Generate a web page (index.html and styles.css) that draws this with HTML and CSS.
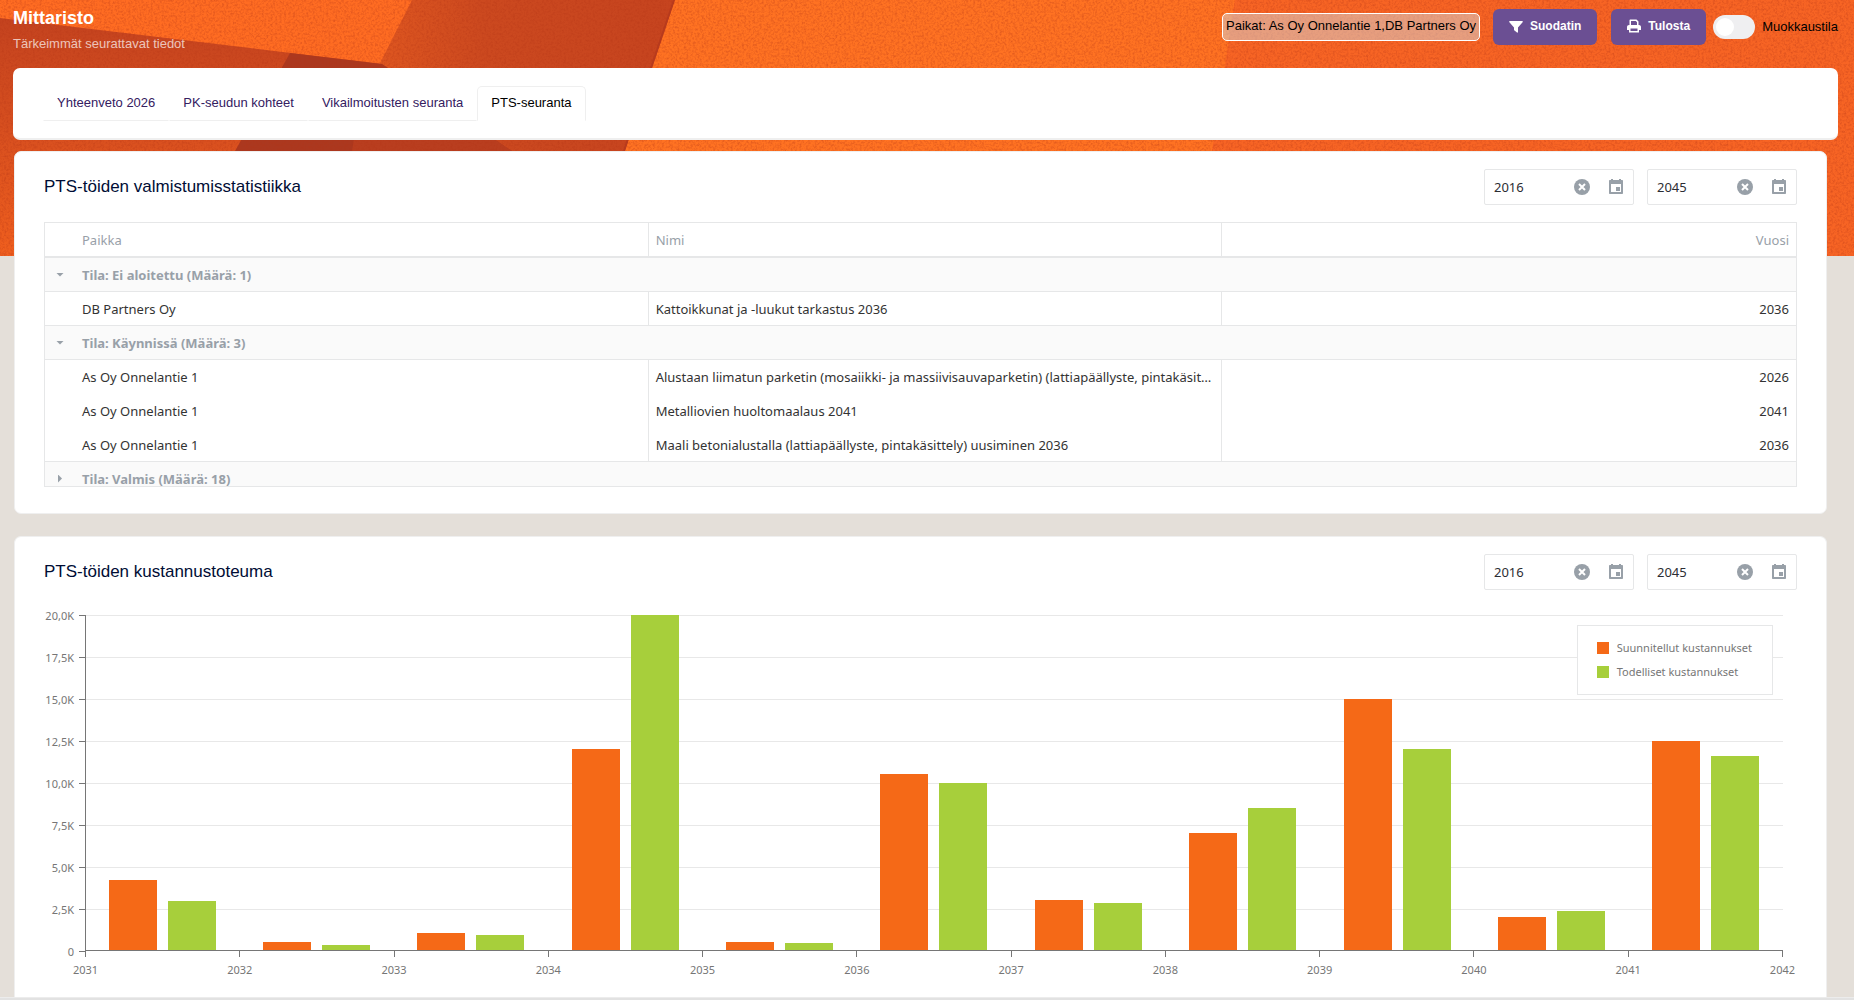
FILE: index.html
```html
<!DOCTYPE html>
<html lang="fi">
<head>
    <meta charset="UTF-8">
    <meta name="viewport" content="width=device-width, initial-scale=1.0">
    <title>Mittaristo</title>
    <link rel="stylesheet" href="styles.css">
</head>
<body>

    <!-- taustakuvio -->
    <svg class="backdrop" viewBox="0 0 1854 256" preserveAspectRatio="none" aria-hidden="true">
        <defs>
            <linearGradient id="leftShade" x1="0" y1="0" x2="0" y2="1">
                <stop offset="0" stop-color="#c4431f"/>
                <stop offset="0.5" stop-color="#d9501f"/>
                <stop offset="1" stop-color="#f05f1e"/>
            </linearGradient>
            <linearGradient id="midShade" x1="0" y1="0" x2="1" y2="0">
                <stop offset="0" stop-color="#de5620"/>
                <stop offset="0.35" stop-color="#cc491f"/>
                <stop offset="1" stop-color="#c6441f"/>
            </linearGradient>
            <filter id="grain" x="0" y="0" width="100%" height="100%" color-interpolation-filters="sRGB">
                <feTurbulence type="fractalNoise" baseFrequency="0.45" numOctaves="3" seed="4"/>
                <feColorMatrix values="0 0 0 0 0.7  0 0 0 0 0.2  0 0 0 0 0.08  0.8 0 0 0 -0.32"/>
            </filter>
        </defs>
        <rect width="1854" height="256" fill="#ff6c22"/>
        <path d="M412 0H675L625 151L590 256H380V63Z" fill="url(#midShade)"/>
        <path d="M0 18L382 64L512 151L600 256H0Z" fill="url(#leftShade)"/>
        <path d="M290 53L382 64L512 151H235Z" fill="#ab381f"/>
        <path d="M360 100L436 100L512 151H352Z" fill="#b93e1f"/>
        <path d="M675 0L652 68L625 151L590 256H1190L1212 151L1235 0Z" fill="#ff7222"/>
        <path d="M674 0L651 68L624 151" fill="none" stroke="#b83b1e" stroke-width="2"/>
        <path d="M1235 0H1854V256H1190L1212 151Z" fill="#f76424"/>
        <rect width="1854" height="256" filter="url(#grain)"/>
    </svg>

    <header class="page-header">
        <div>
            <h1>Mittaristo</h1>
            <p>Tärkeimmät seurattavat tiedot</p>
        </div>
        <div class="toolbar">
            <span class="filter-info">Paikat: As Oy Onnelantie 1,DB Partners Oy</span>
            <button type="button" class="btn">
                <svg viewBox="0 0 14 14" width="14" height="14" aria-hidden="true"><path d="M1 2h12c.8 0 1 .7.6 1.200L9 8.500V13c0 .6-.5.8-1 .5L5.500 11.500C5.200 11.300 5 11 5 10.700V8.500L.4 3.200C0 2.700.2 2 1 2z"/></svg>
                Suodatin
            </button>
            <button type="button" class="btn">
                <svg viewBox="0 0 14 14" width="14" height="14" aria-hidden="true"><path fill-rule="evenodd" d="M3.500 0.500h6L11.500 2.500V6H12c1.100 0 2 .9 2 2v3h-2v2.500H2V11H0V8c0-1.100.9-2 2-2h.5V1.500c0-.6.4-1 1-1zM4 2v4h6V3.200L8.800 2zM3.500 9.500V12h7V9.500z"/></svg>
                Tulosta
            </button>
            <label class="switch">
                <input type="checkbox">
                Muokkaustila
            </label>
        </div>
    </header>

    <nav class="tabs-card">
        <ul class="tabs">
            <li><a href="#">Yhteenveto 2026</a></li>
            <li><a href="#">PK-seudun kohteet</a></li>
            <li><a href="#">Vikailmoitusten seuranta</a></li>
            <li><a href="#" class="active">PTS-seuranta</a></li>
        </ul>
    </nav>

    <main>
        <section class="widget">
            <div class="widget-head">
                <h2>PTS-töiden valmistumisstatistiikka</h2>
                <div class="dates">
                    <div class="date-box">
                        <input type="text" value="2016" aria-label="Alkuvuosi">
                        <button type="button" aria-label="Tyhjennä"><svg viewBox="0 0 16 16"><circle cx="8" cy="8" r="8"/><path d="M5 5l6 6M11 5l-6 6" class="cross"/></svg></button>
                        <button type="button" aria-label="Valitse"><svg viewBox="0 0 16 16"><path fill-rule="evenodd" d="M3 0h2v1h6V0h2v1h1c.6 0 1 .4 1 1v12c0 .6-.4 1-1 1H2c-.6 0-1-.4-1-1V2c0-.6.4-1 1-1h1zM3 5v8h10V5zM8 8h4v4H8z"/></svg></button>
                    </div>
                    <div class="date-box">
                        <input type="text" value="2045" aria-label="Loppuvuosi">
                        <button type="button" aria-label="Tyhjennä"><svg viewBox="0 0 16 16"><circle cx="8" cy="8" r="8"/><path d="M5 5l6 6M11 5l-6 6" class="cross"/></svg></button>
                        <button type="button" aria-label="Valitse"><svg viewBox="0 0 16 16"><path fill-rule="evenodd" d="M3 0h2v1h6V0h2v1h1c.6 0 1 .4 1 1v12c0 .6-.4 1-1 1H2c-.6 0-1-.4-1-1V2c0-.6.4-1 1-1h1zM3 5v8h10V5zM8 8h4v4H8z"/></svg></button>
                    </div>
                </div>
            </div>

            <div class="grid-box">
                <table>
                    <colgroup>
                        <col class="col-toggle">
                        <col>
                        <col>
                        <col>
                    </colgroup>
                    <thead>
                        <tr>
                            <th></th>
                            <th>Paikka</th>
                            <th>Nimi</th>
                            <th class="num">Vuosi</th>
                        </tr>
                    </thead>
                    <tbody>
                        <tr class="group">
                            <td><span class="arrow open"></span></td>
                            <td colspan="3">Tila: Ei aloitettu (Määrä: 1)</td>
                        </tr>
                        <tr class="last">
                            <td></td>
                            <td>DB Partners Oy</td>
                            <td>Kattoikkunat ja -luukut tarkastus 2036</td>
                            <td class="num">2036</td>
                        </tr>
                        <tr class="group">
                            <td><span class="arrow open"></span></td>
                            <td colspan="3">Tila: Käynnissä (Määrä: 3)</td>
                        </tr>
                        <tr>
                            <td></td>
                            <td>As Oy Onnelantie 1</td>
                            <td>Alustaan liimatun parketin (mosaiikki- ja massiivisauvaparketin) (lattiapäällyste, pintakäsittely) uusiminen 2026</td>
                            <td class="num">2026</td>
                        </tr>
                        <tr>
                            <td></td>
                            <td>As Oy Onnelantie 1</td>
                            <td>Metalliovien huoltomaalaus 2041</td>
                            <td class="num">2041</td>
                        </tr>
                        <tr class="last">
                            <td></td>
                            <td>As Oy Onnelantie 1</td>
                            <td>Maali betonialustalla (lattiapäällyste, pintakäsittely) uusiminen 2036</td>
                            <td class="num">2036</td>
                        </tr>
                        <tr class="group">
                            <td><span class="arrow"></span></td>
                            <td colspan="3">Tila: Valmis (Määrä: 18)</td>
                        </tr>
                    </tbody>
                </table>
            </div>
        </section>

        <section class="widget">
            <div class="widget-head">
                <h2>PTS-töiden kustannustoteuma</h2>
                <div class="dates">
                    <div class="date-box">
                        <input type="text" value="2016" aria-label="Alkuvuosi">
                        <button type="button" aria-label="Tyhjennä"><svg viewBox="0 0 16 16"><circle cx="8" cy="8" r="8"/><path d="M5 5l6 6M11 5l-6 6" class="cross"/></svg></button>
                        <button type="button" aria-label="Valitse"><svg viewBox="0 0 16 16"><path fill-rule="evenodd" d="M3 0h2v1h6V0h2v1h1c.6 0 1 .4 1 1v12c0 .6-.4 1-1 1H2c-.6 0-1-.4-1-1V2c0-.6.4-1 1-1h1zM3 5v8h10V5zM8 8h4v4H8z"/></svg></button>
                    </div>
                    <div class="date-box">
                        <input type="text" value="2045" aria-label="Loppuvuosi">
                        <button type="button" aria-label="Tyhjennä"><svg viewBox="0 0 16 16"><circle cx="8" cy="8" r="8"/><path d="M5 5l6 6M11 5l-6 6" class="cross"/></svg></button>
                        <button type="button" aria-label="Valitse"><svg viewBox="0 0 16 16"><path fill-rule="evenodd" d="M3 0h2v1h6V0h2v1h1c.6 0 1 .4 1 1v12c0 .6-.4 1-1 1H2c-.6 0-1-.4-1-1V2c0-.6.4-1 1-1h1zM3 5v8h10V5zM8 8h4v4H8z"/></svg></button>
                    </div>
                </div>
            </div>

            <div class="chart">
                <div class="y-axis">
                    <span>20,0K</span>
                    <span>17,5K</span>
                    <span>15,0K</span>
                    <span>12,5K</span>
                    <span>10,0K</span>
                    <span>7,5K</span>
                    <span>5,0K</span>
                    <span>2,5K</span>
                    <span>0</span>
                </div>
                <div class="plot">
                    <div class="lines">
                        <i></i><i></i><i></i><i></i><i></i><i></i><i></i><i></i>
                    </div>
                    <div class="bars">
                        <div class="year"><b class="plan" style="height: 21%"></b><b class="real" style="height: 14.5%"></b></div>
                        <div class="year"><b class="plan" style="height: 2.25%"></b><b class="real" style="height: 1.5%"></b></div>
                        <div class="year"><b class="plan" style="height: 5%"></b><b class="real" style="height: 4.5%"></b></div>
                        <div class="year"><b class="plan" style="height: 60%"></b><b class="real" style="height: 100%"></b></div>
                        <div class="year"><b class="plan" style="height: 2.25%"></b><b class="real" style="height: 2%"></b></div>
                        <div class="year"><b class="plan" style="height: 52.5%"></b><b class="real" style="height: 50%"></b></div>
                        <div class="year"><b class="plan" style="height: 15%"></b><b class="real" style="height: 14%"></b></div>
                        <div class="year"><b class="plan" style="height: 35%"></b><b class="real" style="height: 42.5%"></b></div>
                        <div class="year"><b class="plan" style="height: 75%"></b><b class="real" style="height: 60%"></b></div>
                        <div class="year"><b class="plan" style="height: 10%"></b><b class="real" style="height: 11.5%"></b></div>
                        <div class="year"><b class="plan" style="height: 62.5%"></b><b class="real" style="height: 58%"></b></div>
                    </div>
                    <ul class="legend">
                        <li><b class="plan"></b>Suunnitellut kustannukset</li>
                        <li><b class="real"></b>Todelliset kustannukset</li>
                    </ul>
                </div>
                <div class="x-axis">
                    <span>2031</span>
                    <span>2032</span>
                    <span>2033</span>
                    <span>2034</span>
                    <span>2035</span>
                    <span>2036</span>
                    <span>2037</span>
                    <span>2038</span>
                    <span>2039</span>
                    <span>2040</span>
                    <span>2041</span>
                    <span>2042</span>
                </div>
            </div>
        </section>
    </main>

    <div class="bottom-edge"></div>

</body>
</html>
```

FILE: styles.css
```css
* {
    box-sizing: border-box;
}

body {
    margin: 0;
    position: relative;
    background-color: #e4dfd9;
    font-family: "Liberation Sans", Arial, sans-serif;
    font-size: 13px;
    color: #000;
}

h1, h2, p, ul {
    margin: 0;
    padding: 0;
}

ul {
    list-style: none;
}

.backdrop {
    position: absolute;
    top: 0;
    left: 0;
    width: 100%;
    height: 256px;
    z-index: -1;
}

/* header */
.page-header {
    display: flex;
    justify-content: space-between;
    height: 68px;
    padding: 8px 16px 0 13px;
}

.page-header h1 {
    font-size: 18px;
    line-height: 20px;
    color: #fff;
}

.page-header p {
    margin-top: 8px;
    line-height: 16px;
    color: rgba(255, 255, 255, 0.7);
}

.toolbar {
    display: flex;
    align-items: flex-start;
}

.filter-info {
    margin: 5px 13px 0 0;
    padding: 0 3px;
    height: 28px;
    line-height: 24px;
    border: 1px solid #fff;
    border-radius: 5px;
    background-color: rgba(215, 215, 215, 0.5);
}

.btn {
    display: flex;
    align-items: center;
    gap: 7px;
    height: 36px;
    margin: 1px 14px 0 0;
    padding: 0 16px 2px;
    border: none;
    border-radius: 6px;
    background-color: #6b4f93;
    color: #fff;
    font: bold 12px "Liberation Sans", Arial, sans-serif;
}

.btn svg {
    fill: #fff;
}

.switch {
    display: flex;
    align-items: center;
    gap: 7px;
    height: 36px;
    margin-left: -7px;
}

.switch input {
    appearance: none;
    width: 42px;
    height: 24px;
    margin: 2px 0 0;
    padding: 3px;
    border-radius: 12px;
    background-color: #efeff1;
}

.switch input::before {
    content: "";
    display: block;
    width: 18px;
    height: 18px;
    border-radius: 50%;
    background-color: #fff;
}

.switch input:checked::before {
    margin-left: auto;
}

/* tabs */
.tabs-card {
    height: 72px;
    margin: 0 16px 0 13px;
    padding: 18px 30px 0;
    border-bottom: 2px solid #efefef;
    border-radius: 7px;
    background-color: #fff;
}

.tabs {
    display: flex;
    width: fit-content;
}

.tabs a {
    display: block;
    height: 35px;
    padding: 0 13px;
    border: 1px solid transparent;
    border-bottom-color: #efefef;
    line-height: 32px;
    color: #34205f;
    text-decoration: none;
}

.tabs a.active {
    border-color: #efefef;
    border-bottom-color: transparent;
    border-radius: 5px 5px 0 0;
    color: #000;
}

/* widgets */
main {
    display: flex;
    flex-direction: column;
    gap: 22px;
    margin: 11px 27px 0 14px;
}

.widget {
    padding: 17px 29px 26px;
    border: 1px solid #efefef;
    border-radius: 7px;
    background-color: #fff;
}

.widget:last-child {
    padding-bottom: 15px;
    border-bottom: none;
    border-radius: 7px 7px 0 0;
}

.widget-head {
    display: flex;
    justify-content: space-between;
    height: 36px;
}

.widget-head h2 {
    font-size: 17px;
    font-weight: normal;
    line-height: 36px;
    color: #000d35;
}

.dates {
    display: flex;
    gap: 13px;
}

.date-box {
    display: flex;
    align-items: center;
    width: 150px;
    height: 36px;
    padding: 0 9px;
    border: 1px solid #e6e7e8;
    border-radius: 2px;
}

.date-box input {
    flex: 1;
    min-width: 0;
    padding: 0;
    border: none;
    outline: none;
    background: none;
    font: 13px "Noto Sans", sans-serif;
    color: #2c2d33;
}

.date-box button {
    width: 16px;
    height: 16px;
    margin-left: 18px;
    padding: 0;
    border: none;
    background: none;
}

.date-box svg {
    display: block;
    fill: #98a0a8;
}

.date-box .cross {
    stroke: #fff;
    stroke-width: 2;
}

/* table */
.grid-box {
    height: 265px;
    margin-top: 17px;
    border: 1px solid #e6e7e8;
    overflow: hidden;
}

table {
    width: 100%;
    table-layout: fixed;
    border-collapse: separate;
    border-spacing: 0;
    font-family: "Noto Sans", sans-serif;
    font-size: 13px;
    color: #333;
}

.col-toggle {
    width: 30px;
}

th, td {
    height: 34px;
    padding: 0 7px;
    border-right: 1px solid #e6e7e8;
    text-align: left;
    white-space: nowrap;
    overflow: hidden;
    text-overflow: ellipsis;
}

th:first-child, td:first-child, th:last-child, td:last-child {
    border-right: none;
}

th {
    height: 35px;
    border-bottom: 2px solid #e6e7e8;
    font-weight: normal;
    color: #98a0a8;
}

th.num, td.num {
    text-align: right;
}

.last td, .group td {
    border-bottom: 1px solid #e6e7e8;
}

.group td {
    background-color: #fafafa;
    color: #98a0a8;
    font-weight: bold;
}

.arrow {
    display: block;
    width: 4px;
    height: 8px;
    margin: 0 auto;
    background-color: #98a0a8;
    clip-path: polygon(0 0, 100% 50%, 0 100%);
}

.arrow.open {
    width: 8px;
    height: 4px;
    clip-path: polygon(0 0, 100% 0, 50% 100%);
}

/* chart */
.plan {
    background-color: #f56917;
}

.real {
    background-color: #a7cf3b;
}

.chart {
    display: grid;
    grid-template-columns: 41px 1fr;
    margin: 25px 14px 0 0;
    font-family: "Noto Sans", sans-serif;
    font-size: 11px;
    color: #767676;
}

.y-axis {
    height: 336px;
}

.y-axis span {
    display: flex;
    align-items: center;
    justify-content: flex-end;
    gap: 5px;
    height: 42px;
}

.y-axis span:first-child {
    margin-top: -21px;
}

.y-axis span::after {
    content: "";
    width: 6px;
    height: 1px;
    background-color: #767676;
}

.plot {
    position: relative;
    display: grid;
    height: 336px;
    border: solid #767676;
    border-width: 0 0 1px 1px;
}

.lines, .bars {
    grid-area: 1 / 1;
}

.lines i {
    display: block;
    height: 42px;
    border-top: 1px solid #e8e8e8;
}

.lines {
    height: 335px;
    overflow: hidden;
}

.bars {
    display: flex;
    height: 335px;
    margin-left: -1px;
}

.year {
    flex: 1;
    display: flex;
    justify-content: center;
    align-items: flex-end;
    gap: 11px;
}

.year b {
    width: 48px;
}

.legend {
    position: absolute;
    top: 10px;
    right: 10px;
    display: flex;
    flex-direction: column;
    gap: 8px;
    padding: 14px 20px 14px 19px;
    border: 1px solid #e6e7e8;
    background-color: #fff;
    line-height: 16px;
}

.legend li {
    display: flex;
    align-items: center;
    gap: 8px;
}

.legend b {
    width: 12px;
    height: 12px;
}

.x-axis {
    grid-column: 2;
    display: flex;
    justify-content: space-between;
    height: 31px;
}

.x-axis span {
    display: flex;
    flex-direction: column;
    align-items: center;
    width: 1px;
    line-height: 16px;
}

.x-axis span::before {
    content: "";
    width: 1px;
    height: 6px;
    margin-bottom: 5px;
    background-color: #767676;
}

.bottom-edge {
    height: 3px;
    border-top: 1px solid #ececec;
    background-color: #e2e2e2;
}
```
